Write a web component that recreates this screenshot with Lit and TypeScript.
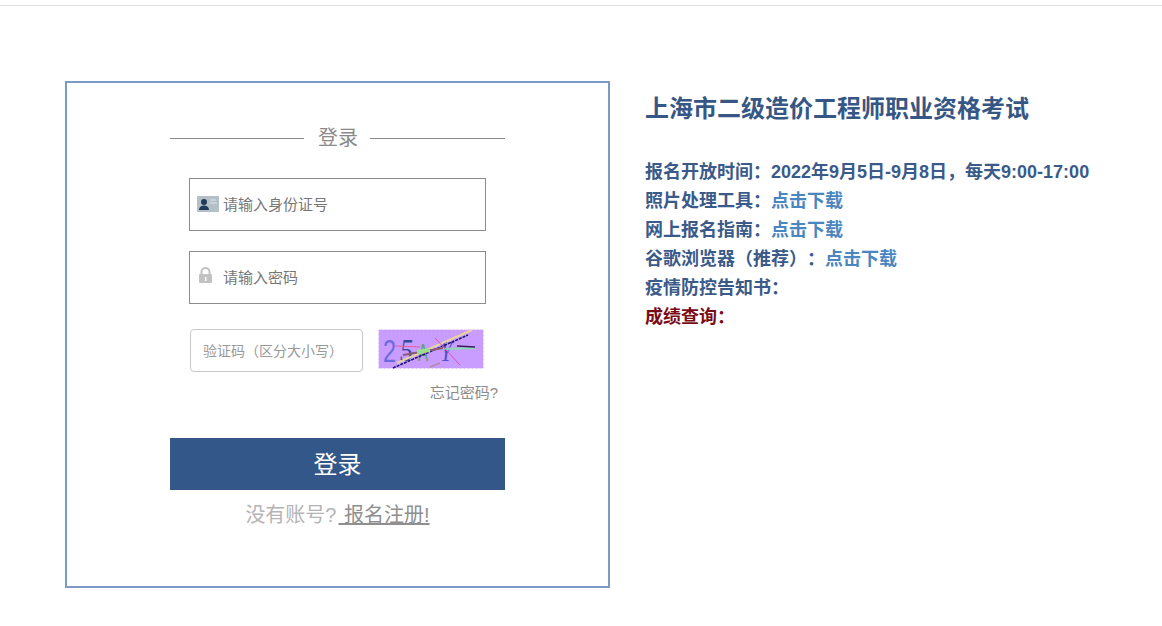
import { LitElement, html, css } from "lit";
import { customElement } from "lit/decorators.js";

@customElement("app-root")
export class AppRoot extends LitElement {
  static styles = css`
    :host { display: block; width: 1162px; height: 626px; box-sizing: border-box; overflow: hidden; background: #fff;
      font-family: "Liberation Sans", "Noto Sans CJK SC", sans-serif; padding-top: 5px; text-spacing-trim: space-all; }
    * { box-sizing: border-box; }
    .topline { height: 1px; background: #e0e0e0; }
    .main { display: flex; padding: 75px 0 0 65px; align-items: flex-start; }
    .card { width: 545px; height: 507px; border: 2px solid #7b9bc4; padding: 42px 0 0 103px; }
    .legend { width: 335px; height: 26px; display: flex; align-items: center; gap: 13px; color: #8a8a8a; font-size: 20px; line-height: 26px; }
    .legend i { flex: 1; height: 1px; background: #8c8c8c; }
    .legend i:first-child { flex: none; width: 134px; }
    .legend span { width: 40px; text-align: center; margin-left: 1px; margin-right: -1px; }
    .field { width: 297px; height: 53px; margin-left: 19px; border: 1px solid #8c8c8c; display: flex; align-items: center; padding-left: 7px; }
    .f1 { margin-top: 27px; }
    .f2 { margin-top: 20px; }
    .ico { width: 22px; height: 16px; flex: none; display: block; }
    .field input { border: 0; outline: 0; padding: 0; margin: 0 0 0 4px; flex: 1; min-width: 0; font: inherit; font-size: 15px; height: 24px; background: transparent; color: #777; }
    .field input::placeholder, .cap input::placeholder { color: #777; opacity: 1; }
    .f1 .ico { margin-top: -2px; }
    .f2 .ico { margin-top: -6px; }
    .caprow { display: flex; margin: 25px 0 0 20px; align-items: flex-start; gap: 15px; }
    .cap { width: 173px; height: 43px; border: 1px solid #c8c8c8; border-radius: 4px; display: flex; align-items: center; padding: 0 0 0 12px; }
    .cap input { border: 0; outline: 0; padding: 0; width: 158px; font: inherit; font-size: 14px; color: #999; background: transparent; }
    .cap input::placeholder { color: #999; }
    .capimg { width: 106px; height: 40px; display: block; flex: none; }
    .forgot { width: 328px; text-align: right; margin-top: 11px; font-size: 15px; line-height: 20px; color: #8a8a8a; height: 20px; }
    .btn { width: 335px; height: 52px; margin-top: 35px; border: 0; padding: 0 0 4px; background: #34578a; color: #fff; font: inherit; font-size: 24px; display: block; }
    .reg { width: 335px; text-align: center; margin-top: 12px; font-size: 20px; line-height: 26px; color: #b4b4b4; white-space: pre; }
    .reg a { color: #8f8f8f; text-decoration: underline; margin-left: 2px; }
    .info { margin-left: 35px; padding-top: 12px; width: 500px; color: #3a5a8a; }
    .info h1 { margin: 0; font-size: 24px; line-height: 32px; font-weight: 700; color: #365785; }
    .rows { margin-top: 33px; font-size: 18px; line-height: 29px; font-weight: 700; }
    .rows a { color: #4a86c0; text-decoration: none; }
    .rows .red { color: #7a0c18; }
  `;

  render() {
    return html`
      <div class="topline"></div>
      <div class="main">
        <div class="card">
          <div class="legend"><i></i><span>登录</span><i></i></div>
          <div class="field f1">
            <svg class="ico" viewBox="0 0 22 16">
              <rect width="22" height="16" rx="1" fill="#b4c0c8"/>
              <circle cx="7" cy="6" r="3" fill="#1f3a56"/>
              <path d="M2 14c0-3 2-4.5 5-4.5s5 1.5 5 4.5z" fill="#1f3a56"/>
              <path d="M13 4h6M13 7h7" stroke="#d0d7dc" stroke-width="1.5"/>
            </svg>
            <input placeholder="请输入身份证号" />
          </div>
          <div class="field f2">
            <svg class="ico" viewBox="0 0 22 16">
              <path d="M4.5 7V5a4 4 0 0 1 8 0v2" fill="none" stroke="#c2c2c2" stroke-width="2"/>
              <rect x="2" y="7" width="13" height="9" rx="1" fill="#c2c2c2"/>
              <rect x="8" y="10" width="1.4" height="4" fill="#fff"/>
            </svg>
            <input placeholder="请输入密码" />
          </div>
          <div class="caprow">
            <div class="cap"><input placeholder="验证码（区分大小写）" /></div>
            <svg class="capimg" viewBox="0 0 106 40">
              <rect x="0.5" y="0.5" width="105" height="39" fill="#c99dff" stroke="#f4ecff" stroke-dasharray="2 2"/>
              <text x="5" y="33" font-family="Liberation Sans" font-size="32" fill="#6a6ae0" textLength="13" lengthAdjust="spacingAndGlyphs">2</text>
              <text x="22" y="32" font-family="Liberation Serif" font-size="32" font-style="italic" fill="#3a4a9a" textLength="13" lengthAdjust="spacingAndGlyphs">5</text>
              <text x="40" y="32" font-family="Liberation Sans" font-size="24" fill="#5fa06a" textLength="10" lengthAdjust="spacingAndGlyphs">A</text>
              <text x="62" y="32" font-family="Liberation Serif" font-size="30" font-style="italic" fill="#5050c8" textLength="12" lengthAdjust="spacingAndGlyphs">Y</text>
              <path d="M19 34L94 1" stroke="#e8d2a0" stroke-width="2"/>
              <path d="M15 39L90 6" stroke="#1a1470" stroke-width="1.6" stroke-dasharray="3 1"/>
              <path d="M17 17L42 18" stroke="#e0609a" stroke-width="1.2"/>
              <path d="M25 26L65 19" stroke="#8a5a7a" stroke-width="2"/>
              <path d="M39 23L52 21" stroke="#9ae08a" stroke-width="4"/>
              <path d="M65 20L97 19" stroke="#8adcb0" stroke-width="2"/>
              <path d="M79 17L97 18" stroke="#40186a" stroke-width="1.5"/>
              <path d="M57 9L82 36" stroke="#e050b0" stroke-width="1"/>
              <path d="M52 38L62 34" stroke="#b08aa8" stroke-width="1.5"/>
            </svg>
          </div>
          <div class="forgot">忘记密码?</div>
          <button class="btn">登录</button>
          <div class="reg">没有账号?<a> 报名注册!</a></div>
        </div>
        <div class="info">
          <h1>上海市二级造价工程师职业资格考试</h1>
          <div class="rows">
            <div>报名开放时间：2022年9月5日-9月8日，每天9:00-17:00</div>
            <div>照片处理工具：<a>点击下载</a></div>
            <div>网上报名指南：<a>点击下载</a></div>
            <div>谷歌浏览器（推荐）：<a>点击下载</a></div>
            <div>疫情防控告知书：</div>
            <div class="red">成绩查询：</div>
          </div>
        </div>
      </div>
    `;
  }
}
